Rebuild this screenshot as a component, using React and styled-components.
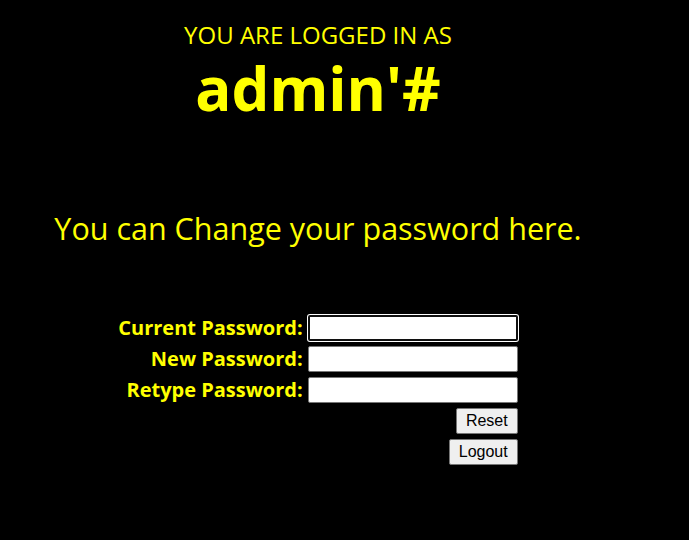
import React from "react";
import styled, { createGlobalStyle } from "styled-components";

const Global = createGlobalStyle`
  html, body {
    background: #000;
  }
  body {
    margin: 8px;
    font-family: "Open Sans", "Noto Sans", sans-serif;
  }
`;

const Page = styled.div`
  width: 620px;
  color: #ffff00;
  text-align: center;
`;

const Caption = styled.div`
  font-size: 24px;
  line-height: 30px;
  padding-top: 12px;
`;

const User = styled.h1`
  margin: 2px 0 0;
  font-size: 60px;
  font-weight: 700;
  line-height: 72px;
`;

const Lead = styled.p`
  margin: 84px 0 0;
  font-size: 30.5px;
  line-height: 40px;
`;

const FormTable = styled.table`
  margin: 62px auto 0;
  border-spacing: 0 5px;
`;

const Label = styled.td`
  text-align: right;
  font-size: 20px;
  font-weight: 700;
  line-height: 26px;
  padding: 0 5px 0 0;
  white-space: nowrap;
`;

const Cell = styled.td`
  padding: 0;
  text-align: right;
  height: 26px;
  line-height: 0;
`;

const Field = styled.input`
  box-sizing: border-box;
  width: 210px;
  height: 26px;
  margin: 0;
  padding: 1px 3px;
  background: #fff;
  border: 1px solid #767676;
  border-radius: 2px;
  ${(p) =>
    p.$focused &&
    `border: 2px solid #101010; box-shadow: 0 0 0 1px #fff; outline: none;`}
`;

const Button = styled.button`
  box-sizing: border-box;
  height: 26px;
  margin: 0;
  padding: 0 9px;
  font-family: "Liberation Sans", Arial, sans-serif;
  font-size: 16px;
  color: #000;
  background: #efefef;
  border: 1px solid #767676;
  border-radius: 2px;
`;

export default function App() {
  return (
    <>
      <Global />
      <Page>
        <Caption>YOU ARE LOGGED IN AS</Caption>
        <User>admin'#</User>
        <Lead>You can Change your password here.</Lead>
        <form>
          <FormTable>
            <tbody>
              <tr>
                <Label>Current Password:</Label>
                <Cell><Field type="password" $focused /></Cell>
              </tr>
              <tr>
                <Label>New Password:</Label>
                <Cell><Field type="password" /></Cell>
              </tr>
              <tr>
                <Label>Retype Password:</Label>
                <Cell><Field type="password" /></Cell>
              </tr>
              <tr>
                <td />
                <Cell><Button type="reset">Reset</Button></Cell>
              </tr>
              <tr>
                <td />
                <Cell><Button type="button">Logout</Button></Cell>
              </tr>
            </tbody>
          </FormTable>
        </form>
      </Page>
    </>
  );
}
